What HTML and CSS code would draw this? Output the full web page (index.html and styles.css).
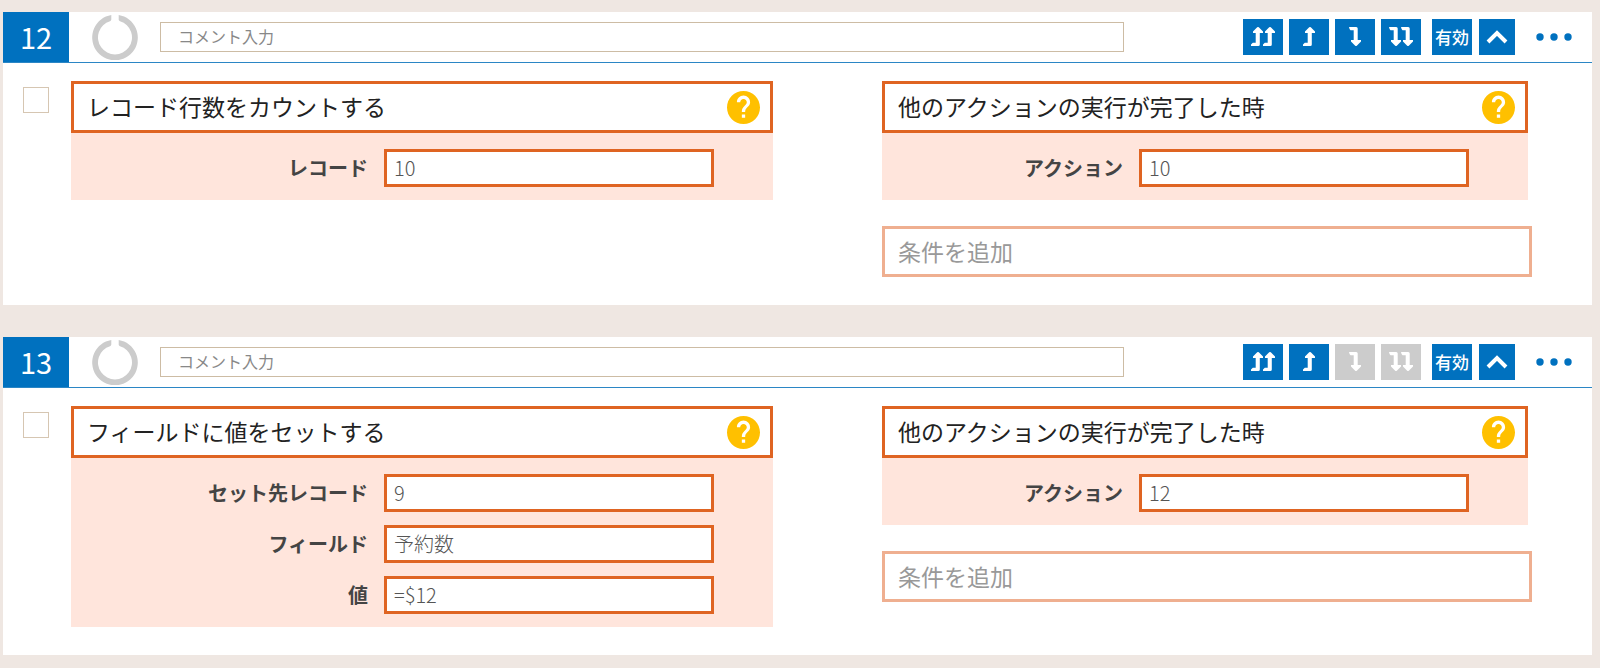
FILE: index.html
```html
<!DOCTYPE html>
<html lang="ja">
<head>
<meta charset="utf-8">
<meta name="viewport" content="width=device-width, initial-scale=1">
<title>アクション設定</title>
<link rel="stylesheet" href="styles.css">
</head>
<body>
<svg class="sprite" aria-hidden="true">
  <symbol id="up" viewBox="0 0 12 19"><path d="M0 19v-1.500L1.800 15.700H4.700V6H2V4.600L6.200.3Q7 -.3 7.800.3L12 4.600V6H8.800v11.500Q8.800 19 7.300 19z"/></symbol>
  <symbol id="down" viewBox="0 0 12 19"><path d="M0 0h7.200Q8.700 0 8.700 1.500V13H12v1.400L7.800 18.700Q7 19.300 6.200 18.700L2 14.400V13H4.700V3.300H1.500Q.4 2.500 0 0z"/></symbol>
  <symbol id="chevron" viewBox="0 0 22 14"><path d="M2 12l9-9 9 9" fill="none" stroke="currentColor" stroke-width="4"/></symbol>
  <symbol id="dots" viewBox="0 0 36 8"><circle cx="4" cy="4" r="3.700"/><circle cx="18" cy="4" r="3.700"/><circle cx="32" cy="4" r="3.700"/></symbol>
  <symbol id="ring" viewBox="0 0 46 46"><path d="M27.500 3.600l-.8 2.900 0-5.500a22.800 22.800 0 1 1-7.400 0v4.500q0 1.300-1.300 1.700a17 17 0 1 0 10 0q-1.300-.4-1.300-1.700z"/></symbol>
  <symbol id="help" viewBox="2 2 20 20"><path d="M12 2C6.480 2 2 6.480 2 12s4.480 10 10 10 10-4.480 10-10S17.520 2 12 2zm1 16.200h-2v-2h2v2zm2.070-7.150l-.9.920C13.450 12.700 13 13.300 13 14.800h-2v-.5c0-1.100.45-2.100 1.170-2.830l1.240-1.260c.37-.36.59-.86.59-1.410 0-1.100-.9-2-2-2s-2 .9-2 2H8c0-2.210 1.790-4 4-4s4 1.790 4 4c0 .88-.36 1.680-.93 2.250z"/></symbol>
</svg>

<main class="list">
  <section class="card">
    <header class="head">
      <h2 class="number">12</h2>
      <svg class="ring" aria-hidden="true"><use href="#ring"/></svg>
      <input class="comment" type="text" placeholder="コメント入力" aria-label="コメント">
      <div class="tools">
        <div class="moves">
          <button class="tool" type="button" aria-label="一番上へ"><svg class="arrow"><use href="#up"/></svg><svg class="arrow"><use href="#up"/></svg></button>
          <button class="tool" type="button" aria-label="上へ"><svg class="arrow"><use href="#up"/></svg></button>
          <button class="tool" type="button" aria-label="下へ"><svg class="arrow"><use href="#down"/></svg></button>
          <button class="tool" type="button" aria-label="一番下へ"><svg class="arrow"><use href="#down"/></svg><svg class="arrow"><use href="#down"/></svg></button>
        </div>
        <button class="tool" type="button">有効</button>
        <button class="tool fold" type="button" aria-label="折りたたむ"><svg class="chevron"><use href="#chevron"/></svg></button>
      </div>
      <button class="more" type="button" aria-label="メニュー"><svg class="dots"><use href="#dots"/></svg></button>
    </header>
    <div class="body">
      <input class="check" type="checkbox" aria-label="アクション12を選択">
      <div class="action">
        <div class="title"><h3 class="name">レコード行数をカウントする</h3><button class="help" type="button" aria-label="ヘルプ"><svg class="mark"><use href="#help"/></svg></button></div>
        <div class="panel">
          <label class="field">レコード<input class="value" type="text" value="10"></label>
        </div>
      </div>
      <div class="condition">
        <div class="rule">
          <div class="title"><h3 class="name">他のアクションの実行が完了した時</h3><button class="help" type="button" aria-label="ヘルプ"><svg class="mark"><use href="#help"/></svg></button></div>
          <div class="panel">
            <label class="field">アクション<input class="value" type="text" value="10"></label>
          </div>
        </div>
        <button class="add" type="button">条件を追加</button>
      </div>
    </div>
  </section>

  <section class="card">
    <header class="head">
      <h2 class="number">13</h2>
      <svg class="ring" aria-hidden="true"><use href="#ring"/></svg>
      <input class="comment" type="text" placeholder="コメント入力" aria-label="コメント">
      <div class="tools">
        <div class="moves">
          <button class="tool" type="button" aria-label="一番上へ"><svg class="arrow"><use href="#up"/></svg><svg class="arrow"><use href="#up"/></svg></button>
          <button class="tool" type="button" aria-label="上へ"><svg class="arrow"><use href="#up"/></svg></button>
          <button class="tool" type="button" aria-label="下へ" disabled><svg class="arrow"><use href="#down"/></svg></button>
          <button class="tool" type="button" aria-label="一番下へ" disabled><svg class="arrow"><use href="#down"/></svg><svg class="arrow"><use href="#down"/></svg></button>
        </div>
        <button class="tool" type="button">有効</button>
        <button class="tool fold" type="button" aria-label="折りたたむ"><svg class="chevron"><use href="#chevron"/></svg></button>
      </div>
      <button class="more" type="button" aria-label="メニュー"><svg class="dots"><use href="#dots"/></svg></button>
    </header>
    <div class="body">
      <input class="check" type="checkbox" aria-label="アクション13を選択">
      <div class="action">
        <div class="title"><h3 class="name">フィールドに値をセットする</h3><button class="help" type="button" aria-label="ヘルプ"><svg class="mark"><use href="#help"/></svg></button></div>
        <div class="panel">
          <label class="field">セット先レコード<input class="value" type="text" value="9"></label>
          <label class="field">フィールド<input class="value" type="text" value="予約数"></label>
          <label class="field">値<input class="value" type="text" value="=$12"></label>
        </div>
      </div>
      <div class="condition">
        <div class="rule">
          <div class="title"><h3 class="name">他のアクションの実行が完了した時</h3><button class="help" type="button" aria-label="ヘルプ"><svg class="mark"><use href="#help"/></svg></button></div>
          <div class="panel">
            <label class="field">アクション<input class="value" type="text" value="12"></label>
          </div>
        </div>
        <button class="add" type="button">条件を追加</button>
      </div>
    </div>
  </section>
</main>
</body>
</html>
```
FILE: styles.css
```css
* {
  box-sizing: border-box;
}

body {
  margin: 0;
  background: #efe7e2;
  color: #333;
  font-family: "Noto Sans CJK JP", sans-serif;
}

button,
input {
  margin: 0;
  font-family: inherit;
}

button {
  padding: 0;
  border: 0;
  background: none;
  cursor: pointer;
}

svg {
  display: block;
  fill: currentColor;
}

.sprite {
  display: none;
}

.list {
  display: grid;
  gap: 32px;
  padding: 12px 8px 12px 3px;
}

.card {
  background: #fff;
}

.head {
  display: flex;
  align-items: center;
  height: 51px;
  border-bottom: 1px solid #2b86c5;
}

.number {
  display: grid;
  place-items: center;
  align-self: stretch;
  width: 66px;
  margin: 0 23px 0 0;
  padding-bottom: 2px;
  background: #0071bf;
  color: #fff;
  font-size: 29px;
  font-weight: 400;
  line-height: 1;
}

.ring {
  width: 46px;
  height: 46px;
  margin-right: 22px;
  color: #ccc;
}

.comment {
  flex: 1;
  min-width: 0;
  height: 30px;
  padding: 0 17px 2px;
  border: 1px solid #cdbca4;
  border-radius: 0;
  font-size: 16px;
}

.comment::placeholder {
  color: #888;
}

.tools,
.moves {
  display: flex;
}

.tools {
  gap: 7px;
  margin-left: 119px;
}

.moves {
  gap: 6px;
  margin-right: 4px;
}

.tool {
  display: flex;
  justify-content: center;
  align-items: center;
  width: 40px;
  height: 36px;
  padding-bottom: 1px;
  background: #0071bf;
  color: #fff;
  font-size: 17px;
  font-weight: 500;
  line-height: 1;
}

.tool:disabled {
  background: #ccc;
  cursor: default;
}

.fold {
  width: 36px;
}

.arrow {
  width: 12px;
  height: 19px;
}

.chevron {
  width: 22px;
  height: 14px;
}

.more {
  margin: 0 20px 0 21px;
  color: #0071bf;
}

.dots {
  width: 36px;
  height: 8px;
}

.body {
  display: grid;
  grid-template-columns: 68px minmax(0, 702fr) 109px minmax(0, 650fr);
  align-items: start;
  padding: 18px 60px 28px 0;
}

.check {
  appearance: none;
  width: 26px;
  height: 26px;
  margin: 6px 0 0 20px;
  border: 1px solid #d6c6b2;
  background: #fff;
}

.check:checked {
  background: #0071bf;
}

.condition {
  grid-column: 4;
  display: grid;
  gap: 26px;
}

.rule {
  margin-right: 4px;
}

.title {
  display: flex;
  justify-content: space-between;
  align-items: center;
  height: 52px;
  padding: 0 10px 0 13px;
  border: 3px solid #df6422;
}

.name {
  margin: 0;
  padding-bottom: 2px;
  color: #222;
  font-size: 23px;
  font-weight: 400;
  line-height: 1;
}

.help {
  color: #ffc000;
}

.mark {
  width: 33px;
  height: 33px;
}

.panel {
  display: grid;
  gap: 13px;
  padding: 16px 59px 13px;
  background: #ffe5dc;
}

.field {
  display: flex;
  justify-content: flex-end;
  align-items: center;
  gap: 16px;
  color: #444;
  font-size: 20px;
  font-weight: 700;
  line-height: 1;
}

.value {
  width: 330px;
  height: 38px;
  padding: 0 7px 1px;
  border: 3px solid #df6422;
  border-radius: 0;
  background: #fff;
  color: #555;
  font-size: 20px;
  font-weight: 300;
}

.add {
  height: 51px;
  padding: 0 13px 1px;
  border: 3px solid #efaf90;
  color: #999;
  font-size: 23px;
  line-height: 1;
  text-align: left;
}
```
